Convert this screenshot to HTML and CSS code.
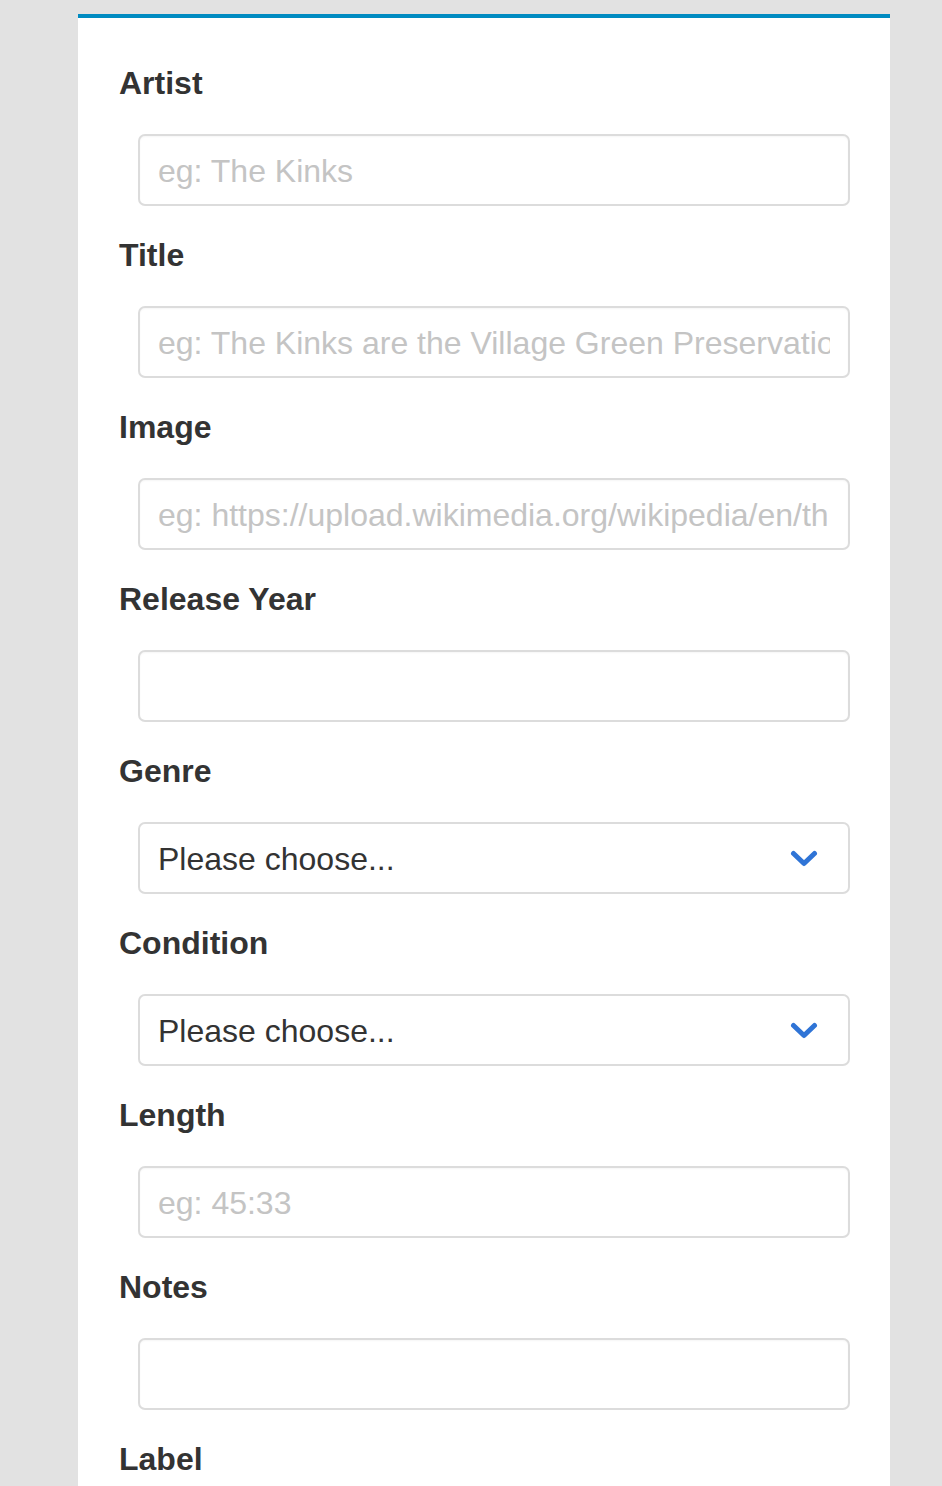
FILE: index.html
```html
<!DOCTYPE html>
<html lang="en">
<head>
<meta charset="utf-8">
<title>Add Record</title>
<link rel="stylesheet" href="styles.css">
</head>
<body>
<form class="card">
  <div class="field">
    <label class="label" for="artist">Artist</label>
    <input class="control" id="artist" type="text" placeholder="eg: The Kinks">
  </div>
  <div class="field">
    <label class="label" for="title">Title</label>
    <input class="control" id="title" type="text" placeholder="eg: The Kinks are the Village Green Preservation Society">
  </div>
  <div class="field">
    <label class="label" for="image">Image</label>
    <input class="control" id="image" type="text" placeholder="eg: https://upload.wikimedia.org/wikipedia/en/thumb/village_green.jpg">
  </div>
  <div class="field">
    <label class="label" for="year">Release Year</label>
    <input class="control" id="year" type="text">
  </div>
  <div class="field">
    <label class="label" for="genre">Genre</label>
    <div class="select-wrap">
      <select class="control select" id="genre">
        <option>Please choose...</option>
      </select>
      <svg class="chevron" width="28" height="20" viewBox="0 0 28 20" aria-hidden="true"><path d="M3.5 4.5 L14 14.5 L24.5 4.5" fill="none" stroke="#2f74d6" stroke-width="5" stroke-linecap="round" stroke-linejoin="round"/></svg>
    </div>
  </div>
  <div class="field">
    <label class="label" for="condition">Condition</label>
    <div class="select-wrap">
      <select class="control select" id="condition">
        <option>Please choose...</option>
      </select>
      <svg class="chevron" width="28" height="20" viewBox="0 0 28 20" aria-hidden="true"><path d="M3.5 4.5 L14 14.5 L24.5 4.5" fill="none" stroke="#2f74d6" stroke-width="5" stroke-linecap="round" stroke-linejoin="round"/></svg>
    </div>
  </div>
  <div class="field">
    <label class="label" for="length">Length</label>
    <input class="control" id="length" type="text" placeholder="eg: 45:33">
  </div>
  <div class="field">
    <label class="label" for="notes">Notes</label>
    <input class="control" id="notes" type="text">
  </div>
  <div class="field">
    <label class="label" for="reclabel">Label</label>
    <input class="control" id="reclabel" type="text">
  </div>
</form>
</body>
</html>
```

FILE: styles.css
```css
html, body {
  margin: 0;
  padding: 0;
  background: #e2e2e2;
}

body {
  padding: 14px 52px 0 78px;
  font-family: "Liberation Sans", Arial, Helvetica, sans-serif;
  color: #333333;
}

.card {
  background: #ffffff;
  border-top: 4px solid #008bc1;
  padding: 45px 40px 40px 40px;
  display: flex;
  flex-direction: column;
}

.field {
  display: flex;
  flex-direction: column;
  margin-bottom: 29px;
}

.label {
  display: block;
  font-size: 32px;
  line-height: 40px;
  font-weight: bold;
  color: #333333;
  margin: 0 0 31px 1px;
}

.control {
  box-sizing: border-box;
  height: 72px;
  margin-left: 20px;
  width: calc(100% - 20px);
  border: 2px solid #dcdcdc;
  border-radius: 7px;
  background: #ffffff;
  box-shadow: inset 0 1px 2px rgba(0, 0, 0, 0.04);
  padding: 2px 18px 0 18px;
  font-family: "Liberation Sans", Arial, Helvetica, sans-serif;
  font-size: 32px;
  color: #333333;
  outline: none;
}

.control::placeholder {
  color: #c4c4c4;
  opacity: 1;
}

.select-wrap {
  position: relative;
  display: flex;
}

.select {
  appearance: none;
  -webkit-appearance: none;
  width: 100%;
  box-shadow: none;
  color: #333333;
}

.chevron {
  position: absolute;
  right: 32px;
  top: 27px;
  pointer-events: none;
}
```
